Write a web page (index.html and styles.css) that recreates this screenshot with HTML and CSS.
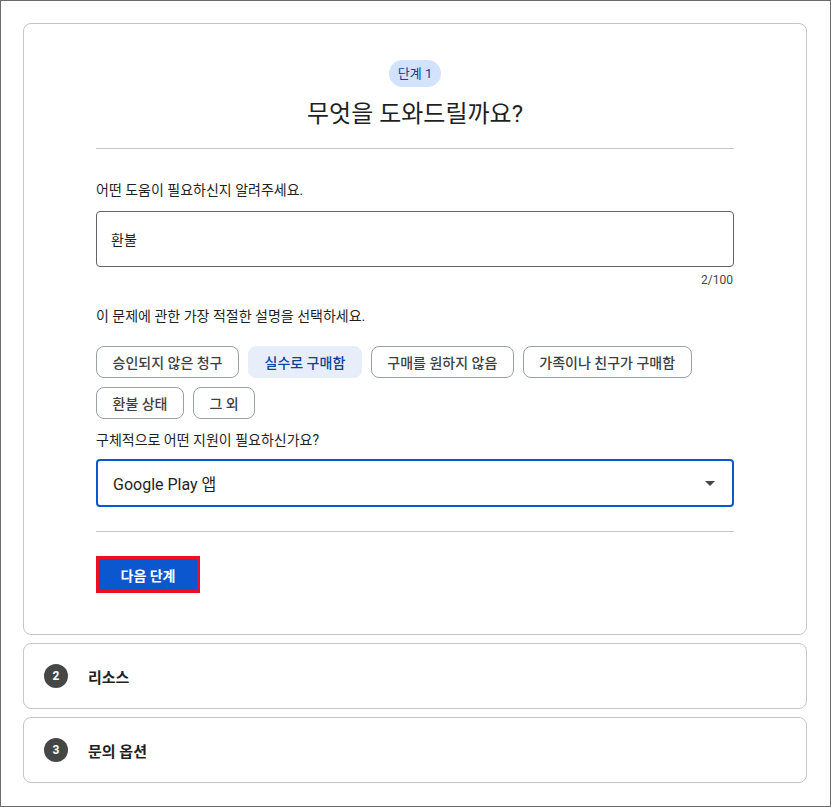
FILE: index.html
```html
<!DOCTYPE html>
<html lang="ko">
<head>
<meta charset="utf-8">
<title>도움말</title>
<link rel="stylesheet" href="styles.css">
</head>
<body>
<div class="frame">
  <section class="card step-card">
    <div class="content">
      <div class="head">
        <span class="badge">단계 1</span>
        <h1 class="title">무엇을 도와드릴까요?</h1>
      </div>
      <hr class="divider">
      <p class="label label-first">어떤 도움이 필요하신지 알려주세요.</p>
      <div class="textbox">환불</div>
      <div class="counter">2/100</div>
      <p class="label label-chips">이 문제에 관한 가장 적절한 설명을 선택하세요.</p>
      <div class="chips">
        <span class="chip">승인되지 않은 청구</span>
        <span class="chip chip-selected">실수로 구매함</span>
        <span class="chip">구매를 원하지 않음</span>
        <span class="chip">가족이나 친구가 구매함</span>
        <span class="chip">환불 상태</span>
        <span class="chip">그 외</span>
      </div>
      <p class="label label-select">구체적으로 어떤 지원이 필요하신가요?</p>
      <div class="select">
        <span>Google Play 앱</span>
        <svg class="arrow" width="10" height="5" viewBox="0 0 10 5"><path d="M0 0h10L5 5z" fill="#444746"/></svg>
      </div>
      <hr class="divider divider-bottom">
      <button class="next">다음 단계</button>
    </div>
  </section>
  <section class="card step-row">
    <span class="num">2</span>
    <span class="row-title">리소스</span>
  </section>
  <section class="card step-row">
    <span class="num">3</span>
    <span class="row-title">문의 옵션</span>
  </section>
</div>
</body>
</html>
```

FILE: styles.css
```css
* { box-sizing: border-box; }
html, body { margin: 0; padding: 0; background: #fff; }
body {
  font-family: Roboto, "Noto Sans CJK KR", "Noto Sans", sans-serif;
  color: #1f1f1f;
}
.frame {
  width: 831px;
  height: 807px;
  border: 1px solid #6b6b6b;
  padding: 22px 23px 0 22px;
  display: flex;
  flex-direction: column;
  gap: 8px;
}
.card {
  border: 1px solid #c4c7c5;
  border-radius: 8px;
  background: #fff;
}
.step-card {
  height: 612px;
  flex: none;
  padding: 36px 0 0;
}
.content {
  width: 638px;
  margin: 0 auto;
}
.head {
  display: flex;
  flex-direction: column;
  align-items: center;
}
.badge {
  background: #d3e3fd;
  color: #0842a0;
  font-size: 13px;
  height: 27px;
  line-height: 27px;
  padding: 0 9px;
  border-radius: 14px;
}
.title {
  margin: 11px 0 0;
  font-size: 24px;
  font-weight: 400;
  line-height: 32px;
  color: #1f1f1f;
}
.divider {
  border: 0;
  border-top: 1px solid #c4c7c5;
  margin: 18px 0 0;
}
.label {
  margin: 0;
  font-size: 14px;
  line-height: 20px;
  color: #1f1f1f;
}
.label-first { margin-top: 31px; }
.textbox {
  margin-top: 11px;
  height: 56px;
  border: 1px solid #5f6368;
  border-radius: 4px;
  padding: 0 14px;
  display: flex;
  align-items: center;
  font-size: 14px;
  color: #1f1f1f;
}
.counter {
  text-align: right;
  font-size: 12px;
  line-height: 16px;
  color: #444746;
  margin-top: 5px;
  padding-right: 1px;
}
.label-chips { margin-top: 18px; }
.chips {
  margin-top: 20px;
  display: flex;
  flex-wrap: wrap;
  gap: 9px;
}
.chip {
  height: 32px;
  border: 1px solid #9aa0a6;
  border-radius: 8px;
  padding: 0 15.5px;
  display: inline-flex;
  align-items: center;
  font-size: 14px;
  font-weight: 500;
  color: #3c4043;
}
.chip-selected {
  background: #e8eef9;
  border-color: #e8eef9;
  color: #0842a0;
}
.label-select { margin-top: 11px; }
.select {
  margin-top: 9px;
  height: 48px;
  border: 2px solid #0b57d0;
  border-radius: 4px;
  padding: 0 17px 0 15px;
  display: flex;
  align-items: center;
  justify-content: space-between;
  font-size: 16px;
  color: #1f1f1f;
}
.arrow { display: block; }
.divider-bottom { margin-top: 24px; }
.next {
  margin-top: 24px;
  display: block;
  background: #0b57d0;
  color: #fff;
  border: 3px solid #e81123;
  font-family: inherit;
  font-size: 14px;
  font-weight: 700;
  height: 37px;
  width: 104px;
  padding: 0;
}
.step-row {
  height: 66px;
  flex: none;
  display: flex;
  align-items: center;
  padding-left: 20px;
}
.num {
  width: 24px;
  height: 24px;
  border-radius: 50%;
  background: #444746;
  color: #fff;
  font-size: 12px;
  font-weight: 700;
  display: inline-flex;
  align-items: center;
  justify-content: center;
}
.row-title {
  margin-left: 20px;
  font-size: 15px;
  font-weight: 700;
  color: #1f1f1f;
}
```
